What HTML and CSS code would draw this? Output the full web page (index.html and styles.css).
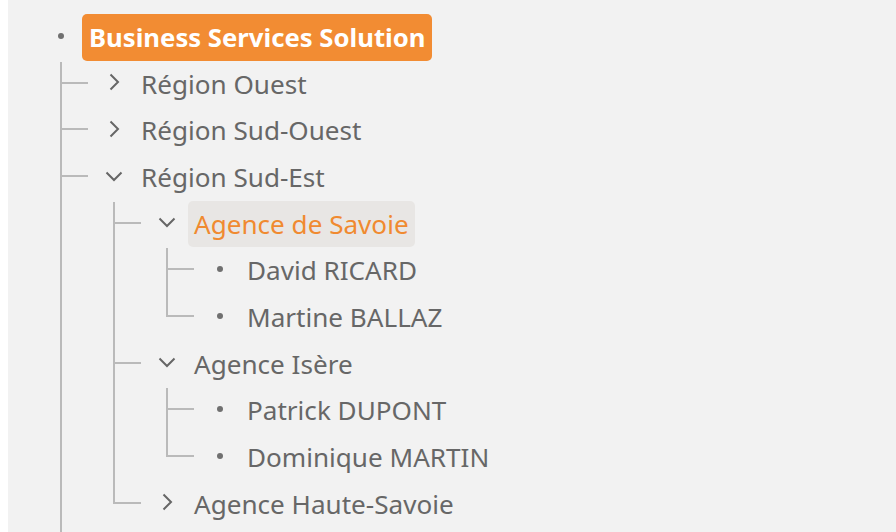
FILE: index.html
```html
<!DOCTYPE html>
<html lang="fr">
<head>
<meta charset="utf-8">
<title>Arborescence</title>
<link rel="stylesheet" href="styles.css">
</head>
<body>
<div class="tree">
  <ul class="level level-0">
    <li class="node">
      <div class="row">
        <span class="switcher"><span class="dot"></span></span>
        <span class="title title-root">Business Services Solution</span>
      </div>
      <ul class="level children continues">
        <li class="node">
          <div class="row">
            <span class="switcher"><svg class="chev" viewBox="0 0 24 24"><polyline points="8.5,4.5 16,12 8.5,19.5"/></svg></span>
            <span class="title">Région Ouest</span>
          </div>
        </li>
        <li class="node">
          <div class="row">
            <span class="switcher"><svg class="chev" viewBox="0 0 24 24"><polyline points="8.5,4.5 16,12 8.5,19.5"/></svg></span>
            <span class="title">Région Sud-Ouest</span>
          </div>
        </li>
        <li class="node">
          <div class="row">
            <span class="switcher"><svg class="chev" viewBox="0 0 24 24"><polyline points="4.5,8.5 12,16 19.5,8.5"/></svg></span>
            <span class="title">Région Sud-Est</span>
          </div>
          <ul class="level children">
            <li class="node">
              <div class="row">
                <span class="switcher"><svg class="chev" viewBox="0 0 24 24"><polyline points="4.5,8.5 12,16 19.5,8.5"/></svg></span>
                <span class="title title-active">Agence de Savoie</span>
              </div>
              <ul class="level children">
                <li class="node">
                  <div class="row">
                    <span class="switcher"><span class="dot"></span></span>
                    <span class="title">David RICARD</span>
                  </div>
                </li>
                <li class="node">
                  <div class="row">
                    <span class="switcher"><span class="dot"></span></span>
                    <span class="title">Martine BALLAZ</span>
                  </div>
                </li>
              </ul>
            </li>
            <li class="node">
              <div class="row">
                <span class="switcher"><svg class="chev" viewBox="0 0 24 24"><polyline points="4.5,8.5 12,16 19.5,8.5"/></svg></span>
                <span class="title">Agence Isère</span>
              </div>
              <ul class="level children">
                <li class="node">
                  <div class="row">
                    <span class="switcher"><span class="dot"></span></span>
                    <span class="title">Patrick DUPONT</span>
                  </div>
                </li>
                <li class="node">
                  <div class="row">
                    <span class="switcher"><span class="dot"></span></span>
                    <span class="title">Dominique MARTIN</span>
                  </div>
                </li>
              </ul>
            </li>
            <li class="node">
              <div class="row">
                <span class="switcher"><svg class="chev" viewBox="0 0 24 24"><polyline points="8.5,4.5 16,12 8.5,19.5"/></svg></span>
                <span class="title">Agence Haute-Savoie</span>
              </div>
            </li>
          </ul>
        </li>
      </ul>
    </li>
  </ul>
</div>
</body>
</html>
```

FILE: styles.css
```css
html, body {
  margin: 0;
  padding: 0;
  background: #ffffff;
  height: 100%;
  overflow: hidden;
}

.tree {
  margin-left: 8px;
  height: 100%;
  overflow: hidden;
  box-sizing: border-box;
  background: #f2f2f2;
  padding: 14px 0 0 41px;
  font-family: "Noto Sans", "Open Sans", sans-serif;
  font-size: 26.1px;
  color: #676767;
}

.level {
  list-style: none;
  margin: 0;
  padding: 0;
}

.children {
  padding-left: 53px;
}

.node {
  position: relative;
}

.row {
  display: flex;
  align-items: center;
  height: 46.67px;
}

.switcher {
  width: 24px;
  height: 24px;
  flex: none;
  display: flex;
  align-items: center;
  justify-content: center;
  margin-top: -3px;
  margin-right: 9px;
}

.dot {
  width: 6px;
  height: 6px;
  border-radius: 50%;
  background: #707070;
}

.chev {
  width: 24px;
  height: 24px;
  fill: none;
  stroke: #666666;
  stroke-width: 2;
}

.title {
  display: block;
  line-height: 46.67px;
  height: 46.67px;
  padding: 0 6px;
  border-radius: 5px;
  white-space: nowrap;
}

.title-root {
  background: #f28c33;
  color: #ffffff;
  font-weight: 700;
  font-size: 25.7px;
  line-height: 48px;
  padding: 0 7px;
}

.title-active {
  background: #e8e6e4;
  color: #f08a30;
}

/* connector lines */
.children > .node::before {
  content: "";
  position: absolute;
  left: -42px;
  top: 1px;
  bottom: 0;
  width: 2px;
  background: #bababa;
}

.children > .node + .node::before {
  top: 0;
}

.children > .node:last-child::before {
  bottom: auto;
  height: 22px;
}

.continues > .node:last-child::before {
  bottom: -10px;
  height: auto;
}

.children > .node::after {
  content: "";
  position: absolute;
  left: -42px;
  top: 21px;
  width: 28px;
  height: 2px;
  background: #bababa;
}
```
